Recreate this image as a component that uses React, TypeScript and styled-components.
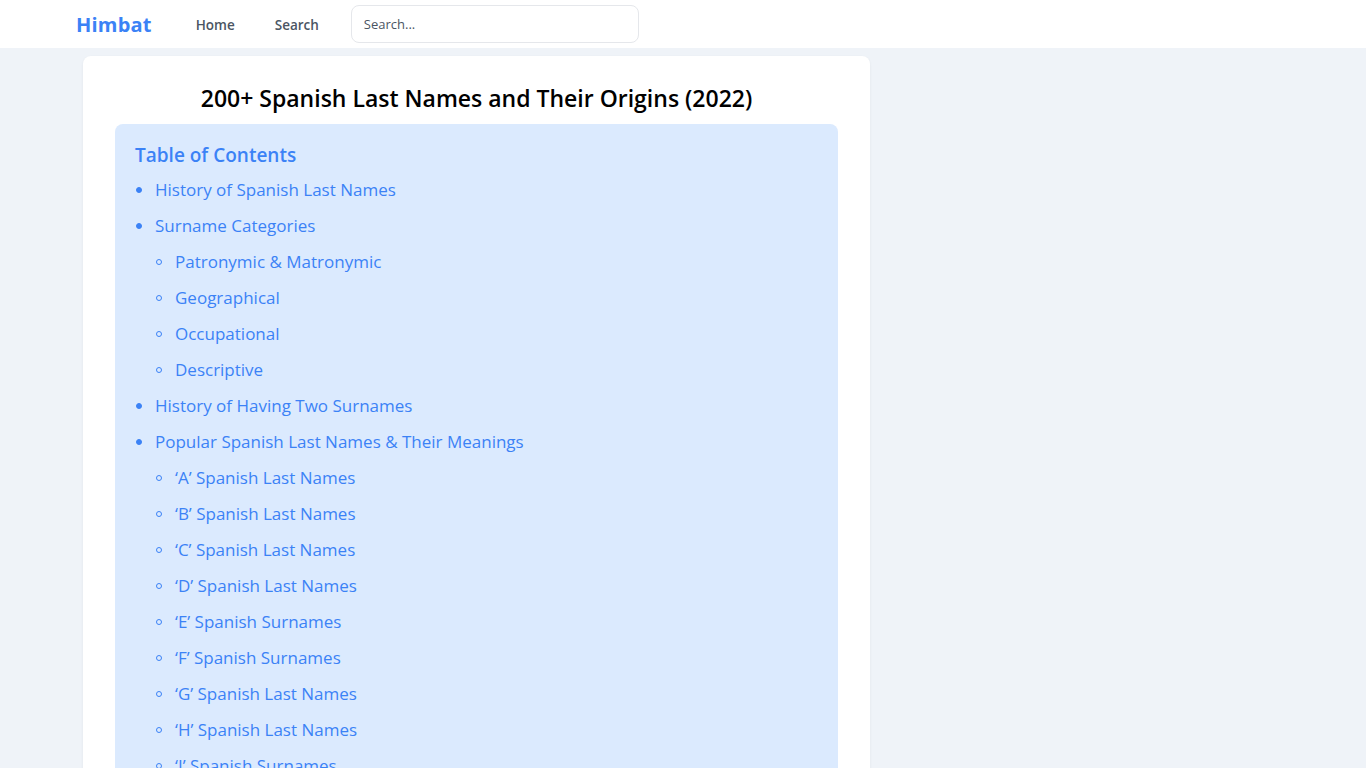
import React from 'react';
import styled, { createGlobalStyle } from 'styled-components';

const GlobalStyle = createGlobalStyle`
  * { box-sizing: border-box; }
  body {
    margin: 0;
    background: #eff3f8;
    font-family: "Open Sans", "Noto Sans", "Liberation Sans", sans-serif;
    color: #111827;
  }
`;

const NavBar = styled.header`
  height: 48px;
  background: #fff;
`;

const NavInner = styled.nav`
  width: 1216px;
  margin: 0 auto;
  height: 100%;
  display: flex;
  align-items: center;
  padding-left: 1px;
`;

const Logo = styled.a`
  font-size: 20px;
  font-weight: 700;
  letter-spacing: 0.01em;
  color: #3b82f6;
  text-decoration: none;
  margin-right: 44px;
`;

const NavLink = styled.a`
  font-size: 13.5px;
  font-weight: 600;
  color: #4b5563;
  text-decoration: none;
  margin-right: 40px;
  padding-top: 2px;
`;

const SearchInput = styled.input`
  width: 288px;
  height: 38px;
  border: 1px solid #e5e7eb;
  border-radius: 8px;
  padding: 0 12px;
  font-family: inherit;
  font-size: 13px;
  color: #374151;
  margin-left: -8px;
  outline: none;

  &::placeholder {
    color: #4b5563;
  }
`;

const Main = styled.main`
  width: 1216px;
  margin: 0 auto;
  padding: 8px 8px 0;
  display: grid;
  grid-template-columns: 787px 1fr;
`;

const Article = styled.article`
  background: #fff;
  border-radius: 8px;
  box-shadow: 0 1px 3px rgba(15, 23, 42, 0.06);
  padding: 24px 32px 32px;
`;

const Title = styled.h1`
  margin: 0 0 8px;
  text-align: center;
  font-size: 23px;
  line-height: 36px;
  font-weight: 600;
  color: #000;
`;

const Toc = styled.div`
  background: #dbeafe;
  border-radius: 8px;
  padding: 15px 20px 16px;
`;

const TocHeading = styled.h2`
  margin: 0;
  font-size: 19px;
  line-height: 33px;
  font-weight: 600;
  color: #3b82f6;
`;

const TocList = styled.ul<{ $nested?: boolean }>`
  margin: 0;
  padding: 0;
  padding-left: ${({ $nested }) => ($nested ? '20px' : '0')};
  list-style: none;
`;

const TocItem = styled.li<{ $nested?: boolean }>`
  position: relative;
  padding-left: 20px;
  font-size: 17px;
  line-height: 36px;
  color: #3b82f6;

  &::before {
    content: '';
    position: absolute;
    left: 1px;
    top: 15px;
    width: 6px;
    height: 6px;
    border-radius: 50%;
    box-sizing: border-box;
    background: ${({ $nested }) => ($nested ? 'transparent' : '#3b82f6')};
    border: 1.2px solid #3b82f6;
  }

  & > a {
    color: inherit;
    text-decoration: none;
  }
`;

type Entry = { label: string; children?: string[] };

const toc: Entry[] = [
  { label: 'History of Spanish Last Names' },
  {
    label: 'Surname Categories',
    children: ['Patronymic & Matronymic', 'Geographical', 'Occupational', 'Descriptive'],
  },
  { label: 'History of Having Two Surnames' },
  {
    label: 'Popular Spanish Last Names & Their Meanings',
    children: [
      '‘A’ Spanish Last Names',
      '‘B’ Spanish Last Names',
      '‘C’ Spanish Last Names',
      '‘D’ Spanish Last Names',
      '‘E’ Spanish Surnames',
      '‘F’ Spanish Surnames',
      '‘G’ Spanish Last Names',
      '‘H’ Spanish Last Names',
      '‘I’ Spanish Surnames',
      '‘J’ Spanish Last Names',
      '‘L’ Spanish Last Names',
      '‘M’ Spanish Last Names',
    ],
  },
];

const App: React.FC = () => {
  return (
    <>
      <GlobalStyle />
      <NavBar>
        <NavInner>
          <Logo href="#">Himbat</Logo>
          <NavLink href="#">Home</NavLink>
          <NavLink href="#">Search</NavLink>
          <SearchInput placeholder="Search..." />
        </NavInner>
      </NavBar>
      <Main>
        <Article>
          <Title>200+ Spanish Last Names and Their Origins (2022)</Title>
          <Toc>
            <TocHeading>Table of Contents</TocHeading>
            <TocList>
              {toc.map((entry) => (
                <React.Fragment key={entry.label}>
                  <TocItem>
                    <a href="#">{entry.label}</a>
                  </TocItem>
                  {entry.children && (
                    <li>
                      <TocList $nested>
                        {entry.children.map((child) => (
                          <TocItem $nested key={child}>
                            <a href="#">{child}</a>
                          </TocItem>
                        ))}
                      </TocList>
                    </li>
                  )}
                </React.Fragment>
              ))}
            </TocList>
          </Toc>
        </Article>
      </Main>
    </>
  );
};

export default App;
